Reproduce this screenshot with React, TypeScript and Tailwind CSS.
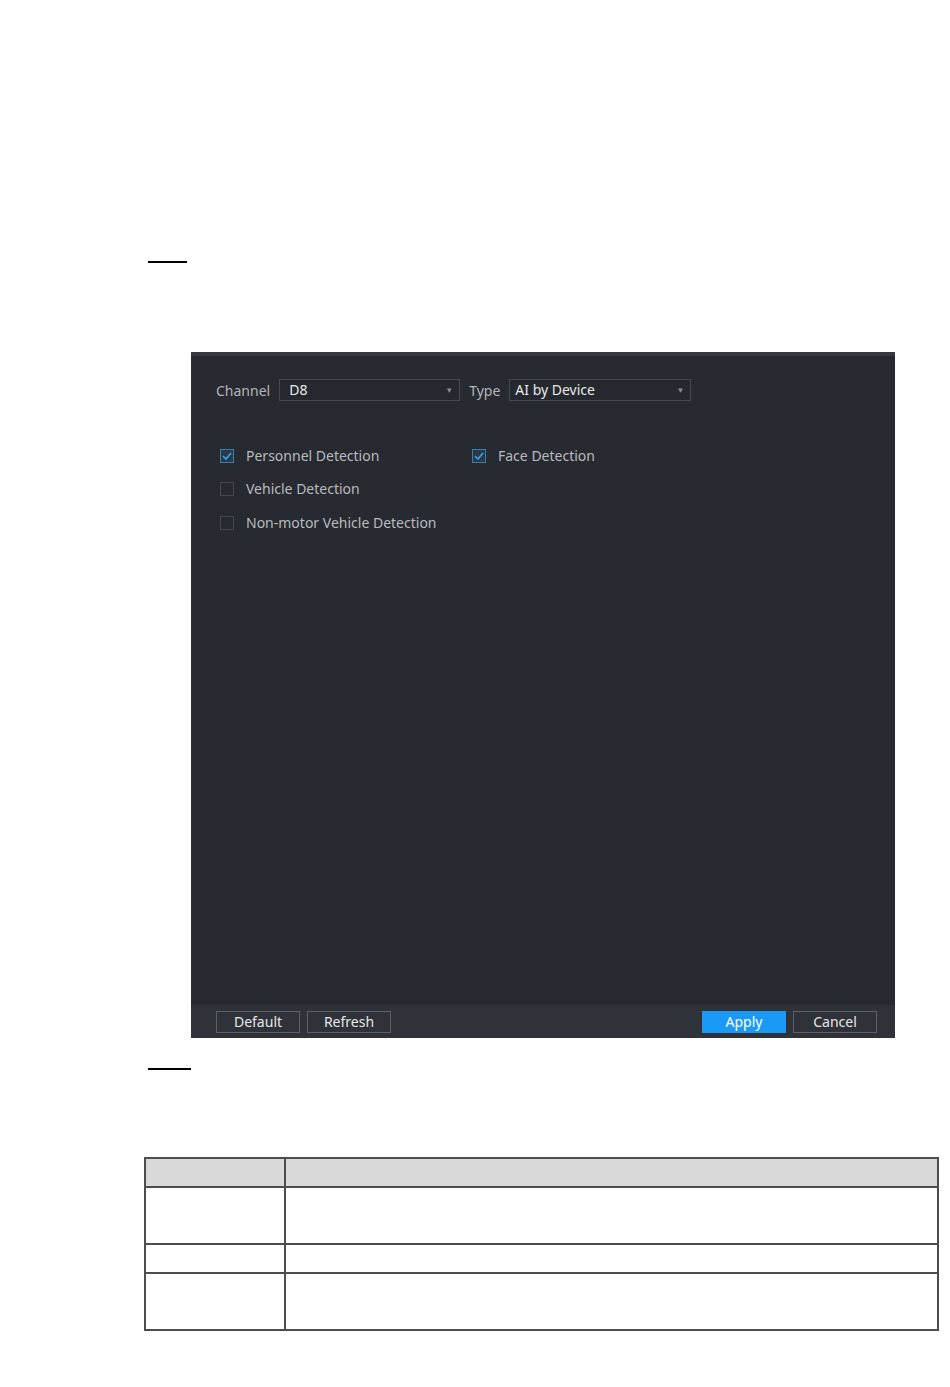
import React from "react";

const font = { fontFamily: '"Noto Sans", "Open Sans", sans-serif' };

const Select = ({ value, width, pad }: { value: string; width: string; pad: string }) => (
  <div className={`${width} ${pad} h-[22px] border border-[#464950] bg-[#25282e] flex items-center justify-between pr-[6px]`}>
    <span className="text-[14px] text-[#e8e8e8] leading-none">{value}</span>
    <span className="text-[8px] text-[#8a8c90] leading-none">▼</span>
  </div>
);

const Check = ({ label, checked }: { label: string; checked?: boolean }) => (
  <div className="flex items-center gap-[12px] h-[33.5px]">
    <div
      className={`w-[14px] h-[14px] border flex items-center justify-center ${
        checked ? "border-[#3a7fa8] bg-[#2a3a48]" : "border-[#44474e]"
      }`}
    >
      {checked && (
        <svg width="10" height="8" viewBox="0 0 10 8">
          <path d="M1 4l3 3 5-6" fill="none" stroke="#33a8f0" strokeWidth="1.6" />
        </svg>
      )}
    </div>
    <span className="text-[14px] text-[#b9bbbf] leading-none">{label}</span>
  </div>
);

const Btn = ({ label, primary }: { label: string; primary?: boolean }) => (
  <div
    className={`w-[84px] h-[22px] flex items-center justify-center text-[14px] leading-none ${
      primary ? "bg-[#1a9af7] text-white" : "border border-[#5d6067] text-[#e6e6e6]"
    }`}
  >
    {label}
  </div>
);

export default function App() {
  return (
    <div className="w-[950px] h-[1387px] bg-white" style={font}>
      <div className="pt-[261px] pl-[148px]">
        <div className="w-[39px] h-[2px] bg-black" />
      </div>

      <div className="mt-[89px] ml-[191px] w-[704px] h-[686px] bg-[#272a31] flex flex-col">
        <div className="h-[4px] bg-[#363940]" />
        <div className="flex-1 pl-[25px] pt-[23px]">
          <div className="flex items-center">
            <span className="text-[14px] text-[#b4b6ba] mr-[9px]">Channel</span>
            <Select value="D8" width="w-[181px]" pad="pl-[9px]" />
            <span className="text-[14px] text-[#b4b6ba] ml-[9px] mr-[9px]">Type</span>
            <Select value="AI by Device" width="w-[182px]" pad="pl-[5px]" />
          </div>
          <div className="mt-[38px] pl-[4px] flex">
            <div className="w-[252px] flex flex-col">
              <Check label="Personnel Detection" checked />
              <Check label="Vehicle Detection" />
              <Check label="Non-motor Vehicle Detection" />
            </div>
            <div className="flex flex-col">
              <Check label="Face Detection" checked />
            </div>
          </div>
        </div>
        <div className="h-[33px] bg-[#2f3239] flex items-start pt-[6px] pl-[25px] pr-[18px]">
          <div className="flex gap-[7px]">
            <Btn label="Default" />
            <Btn label="Refresh" />
          </div>
          <div className="ml-auto flex gap-[7px]">
            <Btn label="Apply" primary />
            <Btn label="Cancel" />
          </div>
        </div>
      </div>

      <div className="pt-[30px] pl-[148px]">
        <div className="w-[43px] h-[2px] bg-black" />
      </div>

      <div className="mt-[87px] ml-[144px] w-[795px] border-2 border-[#4d4d4d]">
        <div className="flex h-[29px] bg-[#d9d9d9] border-b-2 border-[#4d4d4d]">
          <div className="w-[140px] border-r-2 border-[#4d4d4d]" />
          <div className="flex-1" />
        </div>
        <div className="flex h-[57px] border-b-2 border-[#4d4d4d]">
          <div className="w-[140px] border-r-2 border-[#4d4d4d]" />
          <div className="flex-1" />
        </div>
        <div className="flex h-[29px] border-b-2 border-[#4d4d4d]">
          <div className="w-[140px] border-r-2 border-[#4d4d4d]" />
          <div className="flex-1" />
        </div>
        <div className="flex h-[55px]">
          <div className="w-[140px] border-r-2 border-[#4d4d4d]" />
          <div className="flex-1" />
        </div>
      </div>
    </div>
  );
}
